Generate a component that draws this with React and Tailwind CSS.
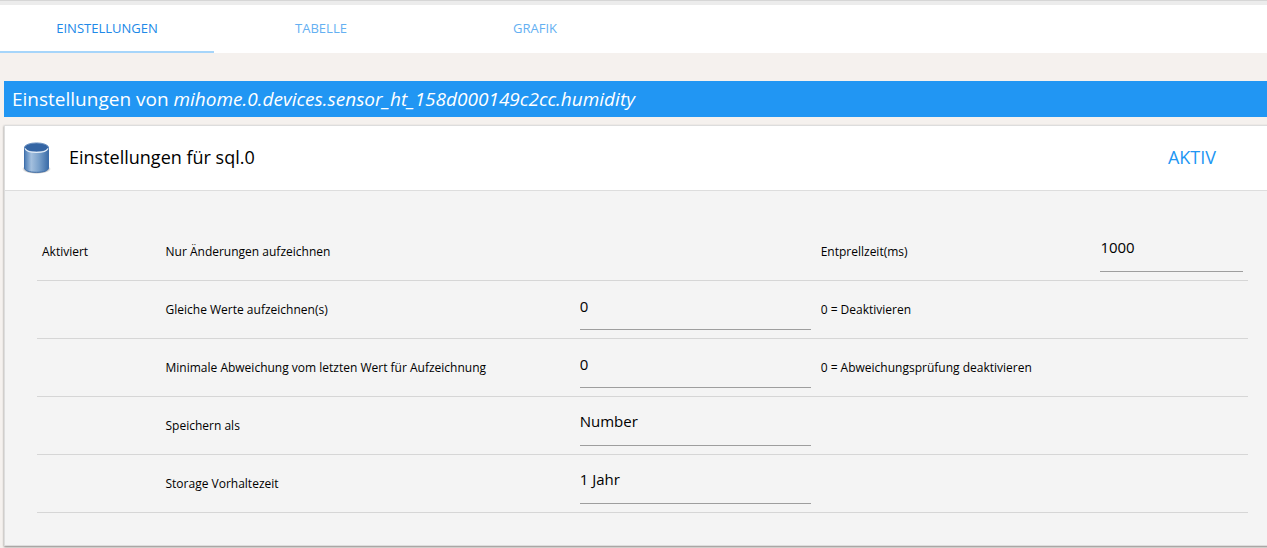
import React, { useState } from "react";

const tabs = [
  { id: "settings", label: "EINSTELLUNGEN" },
  { id: "table", label: "TABELLE" },
  { id: "chart", label: "GRAFIK" },
];

const fieldClass =
  "block h-[44px] w-full appearance-none rounded-none border-b border-[#9e9e9e] bg-transparent pb-1 text-[15px] text-black outline-none";

function DatabaseIcon() {
  return (
    <svg width="32" height="32" viewBox="0 0 32 32" aria-hidden="true">
      <defs>
        <linearGradient id="dbBody" x1="0" x2="1" y1="0" y2="0">
          <stop offset="0" stopColor="#4a7ab3" />
          <stop offset="0.12" stopColor="#6e97c6" />
          <stop offset="0.28" stopColor="#a4c0de" />
          <stop offset="0.6" stopColor="#7aa1cb" />
          <stop offset="1" stopColor="#3a6ca8" />
        </linearGradient>
        <radialGradient id="dbShadow">
          <stop offset="0.7" stopColor="#000" stopOpacity="0.35" />
          <stop offset="1" stopColor="#000" stopOpacity="0" />
        </radialGradient>
      </defs>
      <ellipse cx="15.500" cy="27" rx="14.500" ry="5" fill="url(#dbShadow)" />
      <path
        d="M3.500 5.500v20.500C3.500 28.700 8.500 30.300 15.500 30.300S27.500 28.700 27.500 26V5.500z"
        fill="url(#dbBody)"
        stroke="#3f6fab"
      />
      <ellipse cx="15.500" cy="5.500" rx="12" ry="4.600" fill="#3465a4" stroke="#6d93c2" />
      <path d="M4 6.500C5 9 9.500 10.400 15.500 10.400S26 9 27 6.500" fill="none" stroke="#e4edf7" strokeWidth="1.200" />
    </svg>
  );
}

function Row({ label, htmlFor, children, hint, extra, first }) {
  return (
    <tr className="h-[58px] border-b border-[#d6d6d6]">
      <td className="px-[5px] pt-0.5">{first}</td>
      <td className="px-[5px] pt-0.5">
        <label htmlFor={htmlFor}>{label}</label>
      </td>
      <td className="px-[5px] pb-0.5">{children}</td>
      <td className="px-[5px] pt-0.5">{hint}</td>
      <td className="px-[5px] pb-0.5">{extra}</td>
    </tr>
  );
}

function App() {
  const [activeTab, setActiveTab] = useState("settings");

  return (
    <div className="min-h-screen overflow-hidden bg-[#f5f1ee] font-['Open_Sans',sans-serif] text-black">
      <div className="h-[5px] border-t border-[#d6d6d6] bg-[#ececec]" />
      <nav className="flex h-12 bg-white">
        {tabs.map((tab) => (
          <button
            key={tab.id}
            type="button"
            onClick={() => setActiveTab(tab.id)}
            className={
              activeTab === tab.id
                ? "w-[214px] border-b-2 border-[#a6d5fa] pt-[2px] text-[13px] text-[#2089e8]"
                : "w-[214px] border-b-2 border-transparent pt-[2px] text-[13px] text-[#64b0f2]"
            }
          >
            {tab.label}
          </button>
        ))}
      </nav>

      <h1 className="mt-7 ml-1 h-9 bg-[#2196f3] pl-2 text-[19px] leading-9 whitespace-nowrap text-white">
        Einstellungen von <em>mihome.0.devices.sensor_ht_158d000149c2cc.humidity</em>
      </h1>

      <section className="mt-2 -mr-1 ml-1 border border-[#dddddd] bg-[#f4f4f4] shadow-[0_1px_2px_rgba(0,0,0,0.45)]">
        <header className="flex h-[65px] items-center border-b border-[#dddddd] bg-white pr-[54px] pl-4">
          <DatabaseIcon />
          <h2 className="ml-4 flex-1 pb-0.5 text-[18px]">Einstellungen für sql.0</h2>
          <span className="pb-0.5 text-[18px] text-[#2196f3]">AKTIV</span>
        </header>

        <div className="pt-[31px] pr-[22px] pb-8 pl-8">
          <table className="w-full table-fixed border-collapse text-[12px]">
            <colgroup>
              <col className="w-[10.2%]" />
              <col className="w-[34.2%]" />
              <col className="w-[19.9%]" />
              <col className="w-[23.1%]" />
              <col className="w-[12.6%]" />
            </colgroup>
            <tbody>
              <Row
                first="Aktiviert"
                label="Nur Änderungen aufzeichnen"
                hint={<label htmlFor="debounce">Entprellzeit(ms)</label>}
                extra={<input id="debounce" type="text" defaultValue="1000" className={fieldClass} />}
              />
              <Row label="Gleiche Werte aufzeichnen(s)" htmlFor="interval" hint="0 = Deaktivieren">
                <input id="interval" type="text" defaultValue="0" className={fieldClass} />
              </Row>
              <Row
                label="Minimale Abweichung vom letzten Wert für Aufzeichnung"
                htmlFor="minDelta"
                hint="0 = Abweichungsprüfung deaktivieren"
              >
                <input id="minDelta" type="text" defaultValue="0" className={fieldClass} />
              </Row>
              <Row label="Speichern als" htmlFor="storageType">
                <select id="storageType" className={fieldClass}>
                  <option>Number</option>
                </select>
              </Row>
              <Row label="Storage Vorhaltezeit" htmlFor="retention">
                <select id="retention" className={fieldClass}>
                  <option>1 Jahr</option>
                </select>
              </Row>
            </tbody>
          </table>
        </div>
      </section>
    </div>
  );
}

export default App;
